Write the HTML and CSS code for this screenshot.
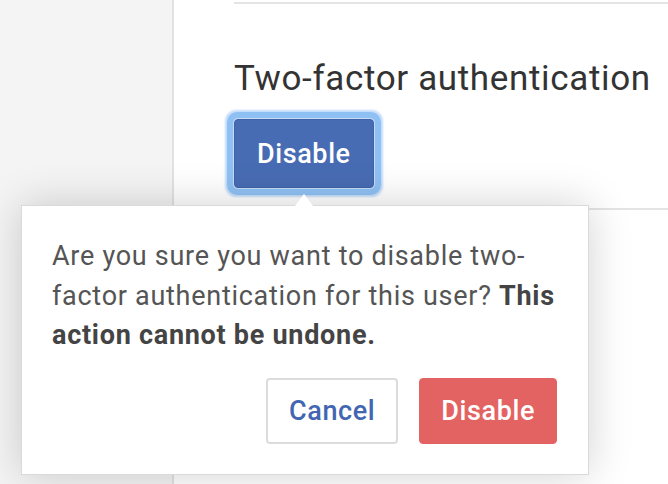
FILE: index.html
```html
<!DOCTYPE html>
<html lang="en">
<head>
  <meta charset="UTF-8">
  <title>User security</title>
  <link rel="stylesheet" href="styles.css">
</head>
<body>

<div class="sidebar"></div>

<div class="main">
  <div class="section">
    <h2>Two-factor authentication</h2>
    <button class="btn btn-primary is-focused">Disable</button>
  </div>
</div>

<div class="popover">
  <p>Are you sure you want to disable two-factor authentication for this user? <strong>This action cannot be undone.</strong></p>
  <div class="popover-actions">
    <button class="btn btn-default">Cancel</button>
    <button class="btn btn-danger">Disable</button>
  </div>
</div>

</body>
</html>
```

FILE: styles.css
```css
body {
  margin: 0;
  height: 484px;
  overflow: hidden;
  display: flex;
  font-family: Roboto, 'Noto Sans', sans-serif;
  background: #fff;
}

.sidebar {
  width: 172px;
  flex-shrink: 0;
  background: #f4f4f4;
  border-right: 2px solid #e2e2e2;
}

.main {
  flex-grow: 1;
  padding-left: 60px;
}

.section {
  margin-top: 2px;
  border-top: 2px solid #e4e4e4;
  border-bottom: 2px solid #e4e4e4;
  padding: 54px 0 20px;
}

.section h2 {
  margin: 0 0 20px;
  font-size: 35px;
  font-weight: 400;
  letter-spacing: 0.65px;
  line-height: 41px;
  color: #333;
}

.btn {
  font-family: inherit;
  font-size: 27px;
  font-weight: 500;
  letter-spacing: 0.6px;
  border-radius: 4px;
  cursor: pointer;
  box-sizing: border-box;
}

.btn-primary {
  display: block;
  height: 69px;
  padding: 0 22px;
  background: #486cb3;
  border: 1px solid #3f62a8;
  color: #fff;
}

.btn-primary.is-focused {
  box-shadow: 0 0 0 1px #c6dcf6, 0 0 0 7px #8fc0f4, 0 0 2px 9px rgba(143, 192, 244, 0.55);
}

.popover {
  position: absolute;
  left: 21px;
  top: 205px;
  width: 568px;
  height: 270px;
  box-sizing: border-box;
  padding: 31px 26px 31px 30px;
  background: #fff;
  border: 1px solid #dadada;
  box-shadow: 0 0 40px rgba(0, 0, 0, 0.18);
}

.popover::before {
  content: '';
  position: absolute;
  top: -12px;
  left: 273px;
  border-left: 9px solid transparent;
  border-right: 9px solid transparent;
  border-bottom: 12px solid #fff;
}

.popover p {
  margin: 0;
  font-size: 27px;
  letter-spacing: 0.72px;
  line-height: 39.5px;
  color: #555;
}

.popover strong {
  color: #444;
  font-weight: 700;
}

.popover-actions {
  display: flex;
  justify-content: flex-end;
  gap: 21px;
  margin-top: 22px;
  padding-right: 5px;
}

.popover-actions .btn {
  height: 66px;
  padding: 0 21px;
}

.btn-default {
  background: #fff;
  border: 2px solid #dcdcdc;
  color: #4266b1;
}

.btn-danger {
  background: #e36363;
  border: 1px solid #e36363;
  color: #fff;
}
```
